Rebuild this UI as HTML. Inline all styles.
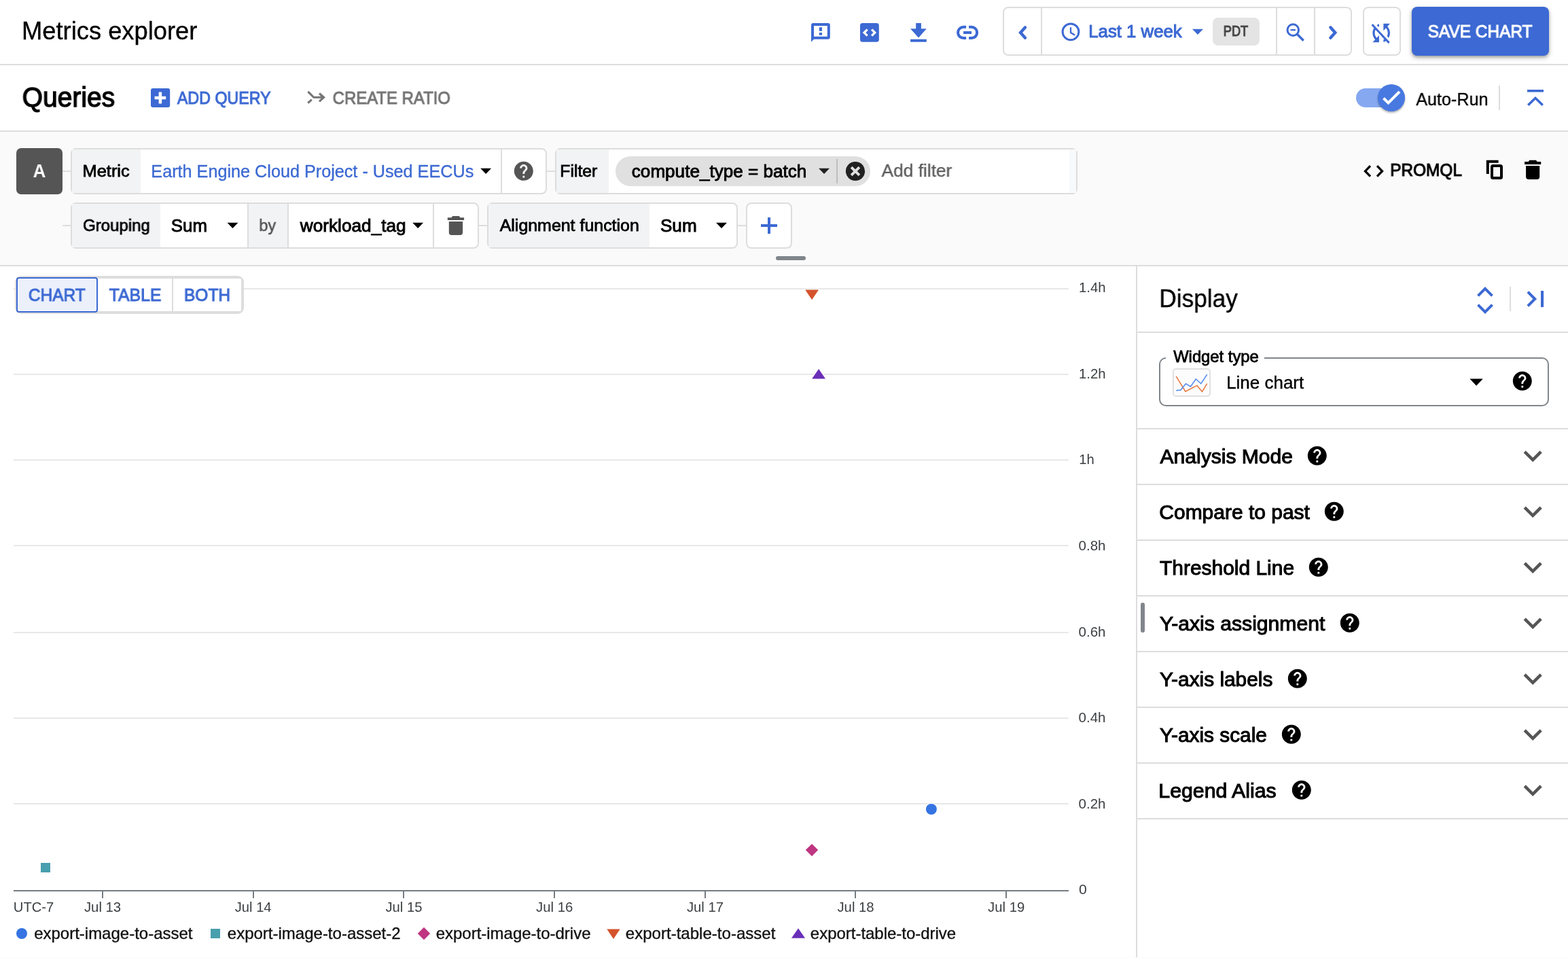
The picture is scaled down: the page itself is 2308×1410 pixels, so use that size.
<!DOCTYPE html>
<html lang="en">
<head>
<meta charset="utf-8">
<meta name="viewport" content="width=2308">
<title>Metrics explorer</title>
<style>
html,body{margin:0;padding:0;background:#fff;}
body{width:2308px;height:1410px;overflow:hidden;font-family:"Liberation Sans",sans-serif;}
#app{position:relative;width:2308px;height:1410px;overflow:hidden;background:#fff;}
#app div,#app svg,#app span{position:absolute;box-sizing:border-box;}
#app svg{display:block;overflow:visible;}
.t{white-space:pre;line-height:1;transform-origin:0 0;will-change:transform;}
.ln{background:#ddd;}
.grp{border:2px solid #ddd;border-radius:8px;background:#fff;overflow:hidden;}
.lab{background:#f1f3f4;}
</style>
</head>
<body>
<div id="app">
<header>
<span class="t" style="left:32px;top:27.52px;font-size:36px;color:#000;-webkit-text-stroke:0.35px #000;transform:translateX(0.03px) scaleX(1.0090);">Metrics explorer</span>
<svg style="left:1190px;top:30px" width="36" height="36" viewBox="1190 30 36 36"><path fill="#3c69d3" fill-rule="evenodd" d="M1197 34h21.8a3 3 0 0 1 3 3v17.7a3 3 0 0 1-3 3H1198l-4 4.1V37a3 3 0 0 1 3-3zM1198 38v15.7h19.8V38zM1205.8 40.2h4.2v5.6h-4.2zM1205.8 48h4.2v3.8h-4.2z"/></svg>
<svg style="left:1262px;top:30px" width="36" height="36" viewBox="1262 30 36 36"><rect x="1266" y="34" width="27.8" height="27.8" rx="3.6" fill="#3c69d3"/><path d="M1276.7 43.3 1272 48l4.7 4.7M1283.1 43.3l4.7 4.7-4.7 4.7" fill="none" stroke="#fff" stroke-width="3.3"/></svg>
<svg style="left:1336px;top:30px" width="32" height="36" viewBox="1336 30 32 36"><path fill="#3c69d3" d="M1348.2 34h7.7v8.2h7.9L1352 55.6 1340.1 42.2h8.1zM1340.1 57.8h23.7v4h-23.7z"/></svg>
<svg style="left:1404px;top:34px" width="40" height="28" viewBox="1404 34 40 28"><path d="M1422.1 39.8H1418.2a8.15 8.15 0 0 0 0 16.3H1422.1M1426.1 39.8H1430a8.15 8.15 0 0 1 0 16.3H1426.1" fill="none" stroke="#3c69d3" stroke-width="4"/><rect x="1418.1" y="46" width="11.9" height="4" fill="#3c69d3"/></svg>
<div style="left:1476px;top:10px;width:514px;height:72px;border:2px solid #ddd;border-radius:8px;background:#fff;"></div>
<div class="ln" style="left:1532px;top:12px;width:2px;height:68px;"></div>
<div class="ln" style="left:1878px;top:12px;width:2px;height:68px;"></div>
<div class="ln" style="left:1934px;top:12px;width:2px;height:68px;"></div>
<svg style="left:1493px;top:31px" width="25" height="34" viewBox="1493 31 25 34"><path d="M1509.01 40.3 L1502.11 48 L1509.01 55.7" fill="none" stroke="#3c69d3" stroke-width="4.4" stroke-linecap="round" stroke-linejoin="miter"/></svg>
<svg style="left:1560px;top:31px" width="32" height="32" viewBox="1560 31 32 32"><circle cx="1576" cy="46.85" r="11.9" fill="none" stroke="#3c69d3" stroke-width="3"/><path d="M1576 40.2v7.8l6.2 3.7" fill="none" stroke="#3c69d3" stroke-width="2.3"/></svg>
<span class="t" style="left:1602px;top:33.56px;font-size:25.2px;color:#3c69d3;-webkit-text-stroke:1.0px #3c69d3;transform:translateX(0.23px) scaleX(1.0231);">Last 1 week</span>
<svg style="left:1753px;top:40px" width="22" height="14" viewBox="1753 40 22 14"><path d="M1755 42.8H1771L1763 50.9z" fill="#3c69d3"/></svg>
<div style="left:1785px;top:26px;width:69px;height:41px;background:#e4e4e4;border-radius:8px;"></div>
<span class="t" style="left:1800px;top:34.71px;font-size:21.6px;color:#444;-webkit-text-stroke:1.1px #444;transform:translateX(0.75px) scaleX(0.8427);">PDT</span>
<svg style="left:1890px;top:31px" width="34" height="34" viewBox="1890 31 34 34"><circle cx="1903.3" cy="44.1" r="8.3" fill="none" stroke="#3c69d3" stroke-width="3"/><path d="M1909.3 50.3 1918.7 59.7" fill="none" stroke="#3c69d3" stroke-width="3.4"/><rect x="1899.5" y="43" width="7.5" height="2.2" fill="#3c69d3"/></svg>
<svg style="left:1949px;top:31px" width="25" height="34" viewBox="1949 31 25 34"><path d="M1958.39 40.3 L1965.29 48 L1958.39 55.7" fill="none" stroke="#3c69d3" stroke-width="4.4" stroke-linecap="round" stroke-linejoin="miter"/></svg>
<div style="left:2006px;top:10px;width:56px;height:72px;border:2px solid #ddd;border-radius:8px;background:#fff;"></div>
<svg style="left:2013.83px;top:27.54px" width="38.36" height="41.17" viewBox="0 0 24 24" preserveAspectRatio="none"><path fill="#3c69d3" d="M10 6.35V4.26c-.8.21-1.55.54-2.23.96l1.46 1.46c.25-.12.5-.24.77-.33zm-7.14-.94l2.36 2.36C4.45 8.99 4 10.44 4 12c0 2.21.91 4.2 2.36 5.64L4 20h6v-6l-2.24 2.24C6.68 15.15 6 13.66 6 12c0-1 .25-1.94.68-2.77l8.08 8.08c-.25.13-.5.25-.77.34v2.09c.8-.21 1.55-.54 2.23-.96l2.36 2.36 1.27-1.27L4.14 4.14 2.86 5.41zM20 4h-6v6l2.24-2.24C17.32 8.85 18 10.34 18 12c0 1-.25 1.94-.68 2.77l1.46 1.46C19.55 15.01 20 13.56 20 12c0-2.21-.91-4.2-2.36-5.64L20 4z"/></svg>
<div style="left:2078px;top:10px;width:202px;height:72px;background:#3c69d3;border-radius:8px;box-shadow:0 2px 4px rgba(0,0,0,.3),0 4px 8px rgba(0,0,0,.15);"></div>
<span class="t" style="left:2101px;top:33.66px;font-size:25.2px;color:#fff;-webkit-text-stroke:1.0px #fff;transform:translateX(0.70px) scaleX(0.9696);">SAVE CHART</span>
<div class="ln" style="left:0px;top:94px;width:2308px;height:2px;"></div>
</header>
<section id="queries-bar">
<span class="t" style="left:32px;top:122.71px;font-size:40.5px;color:#000;-webkit-text-stroke:1.3px #000;transform:translateX(0.62px) scaleX(0.9631);">Queries</span>
<svg style="left:218px;top:126px" width="36" height="36" viewBox="218 126 36 36"><rect x="222" y="130" width="28.2" height="28.1" rx="3" fill="#3c69d3"/><path d="M1 0" fill="none"/><path d="M227.6 144h16.6M235.9 135.6v16.8" stroke="#fff" stroke-width="4.5" fill="none"/></svg>
<span class="t" style="left:260px;top:131.66px;font-size:25.2px;color:#3c69d3;-webkit-text-stroke:1.0px #3c69d3;transform:translateX(0.87px) scaleX(0.9224);">ADD QUERY</span>
<svg style="left:448px;top:130px" width="34" height="28" viewBox="448 130 34 28"><path d="M453.4 134.8 461.8 143.3H476M470 137.5l6.6 5.8-6.6 6M453.2 151.7l5.6-5" fill="none" stroke="#757575" stroke-width="3.1"/></svg>
<span class="t" style="left:489px;top:132.46px;font-size:25.2px;color:#757575;-webkit-text-stroke:1.0px #757575;transform:translateX(0.64px) scaleX(0.9501);">CREATE RATIO</span>
<div style="left:1996px;top:130px;width:72px;height:28px;background:#86a8f0;border-radius:14px;"></div>
<div style="left:2028px;top:124px;width:40px;height:40px;background:#4879e0;border-radius:50%;box-shadow:0 2px 3px rgba(0,0,0,.3);"></div>
<svg style="left:2034px;top:132px;" width="28" height="24" viewBox="0 0 28 24"><path d="M2.5 12.5 9.5 19.5 26 3" fill="none" stroke="#fff" stroke-width="4"/></svg>
<span class="t" style="left:2084px;top:133.86px;font-size:25.2px;color:#000;-webkit-text-stroke:0.35px #000;transform:translateX(0.32px) scaleX(0.9970);">Auto-Run</span>
<div class="ln" style="left:2206px;top:126px;width:2px;height:36px;"></div>
<svg style="left:2248px;top:132px;" width="24" height="24" viewBox="0 0 24 24"><path d="M0 0h24v3.4H0zM12 10 0 21.6l2.5 2.4L12 14.8l9.5 9.2 2.5-2.4z" fill="#3c69d3"/></svg>
<div class="ln" style="left:0px;top:192px;width:2308px;height:2px;"></div>
</section>
<section id="query-a">
<div style="left:0px;top:194px;width:2308px;height:196px;background:#fafafa;"></div>
<div style="left:24px;top:218px;width:68px;height:68px;background:#555;border-radius:7px;"></div>
<span class="t" style="left:48px;top:239.14px;font-size:27px;color:#fff;font-weight:700;transform:translateX(0.54px) scaleX(0.9631);">A</span>
<div class="ln" style="left:92px;top:251px;width:12px;height:2px;"></div>
<div class="grp" style="left:104px;top:218px;width:701px;height:68px;"></div>
<div class="lab" style="left:106px;top:220px;width:101px;height:64px;"></div>
<span class="t" style="left:121px;top:239.81px;font-size:24.2px;color:#000;-webkit-text-stroke:0.8px #000;transform:translateX(0.52px) scaleX(1.0506);">Metric</span>
<span class="t" style="left:222px;top:239.66px;font-size:25.2px;color:#3c69d3;-webkit-text-stroke:0.35px #3c69d3;transform:translateX(0.37px) scaleX(1.0006);">Earth Engine Cloud Project - Used EECUs</span>
<svg style="left:705px;top:245px" width="21" height="14" viewBox="705 245 21 14"><path d="M707.2 247.8H723.1L715.15 256z" fill="#000"/></svg>
<div class="ln" style="left:737px;top:220px;width:2px;height:64px;"></div>
<svg style="left:754.2px;top:235.2px" width="33.6" height="33.6" viewBox="0 0 24 24"><path fill="#555" d="M12 2C6.48 2 2 6.48 2 12s4.48 10 10 10 10-4.48 10-10S17.52 2 12 2zm1 17h-2v-2h2v2zm2.07-7.75l-.9.92C13.45 12.9 13 13.5 13 15h-2v-.5c0-1.1.45-2.1 1.17-2.83l1.24-1.26c.37-.36.59-.86.59-1.41 0-1.1-.9-2-2-2s-2 .9-2 2H8c0-2.21 1.79-4 4-4s4 1.79 4 4c0 .88-.36 1.68-.93 2.25z"/></svg>
<div class="ln" style="left:805px;top:251px;width:12px;height:2px;"></div>
<div class="grp" style="left:817px;top:218px;width:769px;height:68px;"></div>
<div class="lab" style="left:819px;top:220px;width:77px;height:64px;"></div>
<div style="left:1574px;top:220px;width:10px;height:64px;background:#f8f9fa;"></div>
<span class="t" style="left:824px;top:239.51px;font-size:24.2px;color:#000;-webkit-text-stroke:0.8px #000;transform:translateX(0.33px) scaleX(1.0217);">Filter</span>
<div style="left:906px;top:230px;width:375px;height:44px;background:#e0e0e0;border-radius:22px;"></div>
<span class="t" style="left:929px;top:239.66px;font-size:25.2px;color:#000;-webkit-text-stroke:0.85px #000;transform:translateX(0.82px) scaleX(1.0359);">compute_type = batch</span>
<svg style="left:1203px;top:245px" width="21" height="14" viewBox="1203 245 21 14"><path d="M1205.1 247.8H1221L1213.05 256z" fill="#212121"/></svg>
<div style="left:1231px;top:234px;width:2px;height:36px;background:#bdbdbd;"></div>
<svg style="left:1242px;top:235px" width="34" height="34" viewBox="1242 235 34 34"><circle cx="1259" cy="252" r="14.1" fill="#212121"/><path d="M1253.1 246.1 1264.9 257.9M1264.9 246.1 1253.1 257.9" stroke="#e0e0e0" stroke-width="3.9" fill="none"/></svg>
<span class="t" style="left:1297px;top:238.38px;font-size:26.6px;color:#5c5c5c;-webkit-text-stroke:0.35px #5c5c5c;transform:translateX(0.56px) scaleX(0.9883);">Add filter</span>
<svg style="left:2003px;top:238px" width="38" height="28" viewBox="2003 238 38 28"><path d="M2017 244.2 2009.5 251.9 2017 259.6M2027 244.2 2034.5 251.9 2027 259.6" fill="none" stroke="#000" stroke-width="3.3"/></svg>
<span class="t" style="left:2046px;top:237.56px;font-size:25.2px;color:#000;-webkit-text-stroke:1.0px #000;transform:translateX(0.22px) scaleX(0.9680);">PROMQL</span>
<svg style="left:2184px;top:232px" width="32" height="36" viewBox="2184 232 32 36"><path d="M2205.6 237.8H2189.8V256" fill="none" stroke="#000" stroke-width="4"/><rect x="2196" y="244" width="14" height="18.1" rx="1.5" fill="none" stroke="#000" stroke-width="4"/></svg>
<svg style="left:2242px;top:233px" width="30" height="34" viewBox="2242 233 30 34"><path d="M2251.33 235.8H2260.97L2262.57 238.1H2268.2V242H2244.1V238.1H2249.73zM2246.1 243.9H2266.2V260.1a4 4 0 0 1 -4 4H2250.1a4 4 0 0 1 -4 -4z" fill="#000"/></svg>
<div class="ln" style="left:92px;top:331px;width:12px;height:2px;"></div>
<div class="grp" style="left:104px;top:298px;width:601px;height:68px;"></div>
<div class="lab" style="left:106px;top:300px;width:130px;height:64px;"></div>
<span class="t" style="left:122px;top:319.51px;font-size:24.2px;color:#000;-webkit-text-stroke:0.8px #000;transform:translateX(0.06px) scaleX(0.9927);">Grouping</span>
<span class="t" style="left:251px;top:319.66px;font-size:25.2px;color:#000;-webkit-text-stroke:0.9px #000;transform:translateX(0.82px) scaleX(1.0253);">Sum</span>
<svg style="left:332px;top:325px" width="21" height="14" viewBox="332 325 21 14"><path d="M334.5 327.8H350.4L342.45 336z" fill="#000"/></svg>
<div class="ln" style="left:364px;top:300px;width:2px;height:64px;"></div>
<div class="lab" style="left:366px;top:300px;width:57px;height:64px;"></div>
<span class="t" style="left:381px;top:319.51px;font-size:24.2px;color:#555;-webkit-text-stroke:0.6px #555;transform:translateX(0.40px) scaleX(0.9632);">by</span>
<div class="ln" style="left:423px;top:300px;width:2px;height:64px;"></div>
<span class="t" style="left:441px;top:319.66px;font-size:25.2px;color:#000;-webkit-text-stroke:0.9px #000;transform:translateX(0.78px) scaleX(1.0406);">workload_tag</span>
<svg style="left:605px;top:325px" width="21" height="14" viewBox="605 325 21 14"><path d="M607.2 327.8H623.1L615.15 336z" fill="#000"/></svg>
<div class="ln" style="left:637px;top:300px;width:2px;height:64px;"></div>
<svg style="left:656px;top:315px" width="30" height="34" viewBox="656 315 30 34"><path d="M666.09 317.9H675.81L677.4 320.18H683.1V324.06H658.8V320.18H664.5zM660.79 325.94H681.11V342.03a3.97 3.97 0 0 1 -3.97 3.97H664.76a3.97 3.97 0 0 1 -3.97 -3.97z" fill="#555"/></svg>
<div class="ln" style="left:705px;top:331px;width:12px;height:2px;"></div>
<div class="grp" style="left:717px;top:298px;width:369px;height:68px;"></div>
<div class="lab" style="left:719px;top:300px;width:237px;height:64px;"></div>
<span class="t" style="left:735px;top:319.51px;font-size:24.2px;color:#000;-webkit-text-stroke:0.8px #000;transform:translateX(0.67px) scaleX(1.0309);">Alignment function</span>
<span class="t" style="left:971px;top:319.66px;font-size:25.2px;color:#000;-webkit-text-stroke:0.9px #000;transform:translateX(0.95px) scaleX(1.0371);">Sum</span>
<svg style="left:1052px;top:325px" width="22" height="14" viewBox="1052 325 22 14"><path d="M1054 327.8H1070L1062 336z" fill="#000"/></svg>
<div class="ln" style="left:1086px;top:331px;width:12px;height:2px;"></div>
<div class="grp" style="left:1098px;top:298px;width:68px;height:68px;"></div>
<svg style="left:1116px;top:316px" width="32" height="32" viewBox="1116 316 32 32"><path d="M1120 332h24M1132 320v24" stroke="#3c69d3" stroke-width="4" fill="none"/></svg>
<div style="left:1142px;top:377px;width:44px;height:6px;background:#80868b;border-radius:3px;"></div>
<div class="ln" style="left:0px;top:390px;width:2308px;height:2px;"></div>
</section>
<main id="chart">
<div style="left:20px;top:424px;width:1553px;height:2px;background:#e8e8e8;"></div>
<div style="left:20px;top:550px;width:1553px;height:2px;background:#e8e8e8;"></div>
<div style="left:20px;top:676px;width:1553px;height:2px;background:#e8e8e8;"></div>
<div style="left:20px;top:802px;width:1553px;height:2px;background:#e8e8e8;"></div>
<div style="left:20px;top:930px;width:1553px;height:2px;background:#e8e8e8;"></div>
<div style="left:20px;top:1056px;width:1553px;height:2px;background:#e8e8e8;"></div>
<div style="left:20px;top:1182px;width:1553px;height:2px;background:#e8e8e8;"></div>
<div style="left:20px;top:1310px;width:1553px;height:2px;background:#757c82;"></div>
<div style="left:150px;top:1312px;width:2px;height:10px;background:#757c82;"></div>
<div style="left:372px;top:1312px;width:2px;height:10px;background:#757c82;"></div>
<div style="left:593px;top:1312px;width:2px;height:10px;background:#757c82;"></div>
<div style="left:815px;top:1312px;width:2px;height:10px;background:#757c82;"></div>
<div style="left:1037px;top:1312px;width:2px;height:10px;background:#757c82;"></div>
<div style="left:1258px;top:1312px;width:2px;height:10px;background:#757c82;"></div>
<div style="left:1480px;top:1312px;width:2px;height:10px;background:#757c82;"></div>
<span class="t" style="left:1587px;top:414.24px;font-size:19.8px;color:#3c4043;transform:translateX(0.96px) scaleX(1.0295);">1.4h</span>
<span class="t" style="left:1587px;top:541.24px;font-size:19.8px;color:#3c4043;transform:translateX(0.96px) scaleX(1.0295);">1.2h</span>
<span class="t" style="left:1588px;top:667.24px;font-size:19.8px;color:#3c4043;transform:translateX(0.22px) scaleX(1.0222);">1h</span>
<span class="t" style="left:1587px;top:794.24px;font-size:19.8px;color:#3c4043;transform:translateX(0.59px) scaleX(1.0364);">0.8h</span>
<span class="t" style="left:1587px;top:921.24px;font-size:19.8px;color:#3c4043;transform:translateX(0.59px) scaleX(1.0364);">0.6h</span>
<span class="t" style="left:1587px;top:1047.24px;font-size:19.8px;color:#3c4043;transform:translateX(0.59px) scaleX(1.0364);">0.4h</span>
<span class="t" style="left:1587px;top:1174.24px;font-size:19.8px;color:#3c4043;transform:translateX(0.59px) scaleX(1.0364);">0.2h</span>
<span class="t" style="left:1587px;top:1300.24px;font-size:19.8px;color:#3c4043;transform:translateX(0.90px) scaleX(1.0676);">0</span>
<span class="t" style="left:19px;top:1326.24px;font-size:19.8px;color:#3c4043;transform:translateX(0.85px) scaleX(1.0202);">UTC-7</span>
<span class="t" style="left:123px;top:1326.24px;font-size:19.8px;color:#3c4043;transform:translateX(0.93px) scaleX(1.0274);">Jul 13</span>
<span class="t" style="left:345px;top:1326.24px;font-size:19.8px;color:#3c4043;transform:translateX(0.73px) scaleX(1.0200);">Jul 14</span>
<span class="t" style="left:567px;top:1326.24px;font-size:19.8px;color:#3c4043;transform:translateX(0.43px) scaleX(1.0237);">Jul 15</span>
<span class="t" style="left:789px;top:1326.24px;font-size:19.8px;color:#3c4043;transform:translateX(0.10px) scaleX(1.0287);">Jul 16</span>
<span class="t" style="left:1010px;top:1326.24px;font-size:19.8px;color:#3c4043;transform:translateX(0.94px) scaleX(1.0231);">Jul 17</span>
<span class="t" style="left:1232px;top:1326.24px;font-size:19.8px;color:#3c4043;transform:translateX(0.46px) scaleX(1.0256);">Jul 18</span>
<span class="t" style="left:1454px;top:1326.24px;font-size:19.8px;color:#3c4043;transform:translateX(0.12px) scaleX(1.0245);">Jul 19</span>
<svg style="left:0px;top:392px;" width="1672" height="940" viewBox="0 392 1672 940"><rect x="60" y="1270" width="14" height="14" fill="#489fae" stroke="#fff" stroke-width="2" paint-order="stroke"/><path d="M1185.2 426.5h19.8L1195.1 441.2z" fill="#d4532c" stroke="#fff" stroke-width="2" paint-order="stroke"/><path d="M1205.1 543l9.9 14.6h-19.8z" fill="#6a2fb8" stroke="#fff" stroke-width="2" paint-order="stroke"/><path d="M1195 1241.9l9.2 9.2-9.2 9.2-9.2-9.2z" fill="#bf3682" stroke="#fff" stroke-width="2" paint-order="stroke"/><circle cx="1370.9" cy="1191" r="8" fill="#3574e2" stroke="#fff" stroke-width="2" paint-order="stroke"/></svg>
<div style="left:22px;top:406px;width:337px;height:56px;background:#ddd;border-radius:9px;"></div>
<div style="left:26px;top:410px;width:329px;height:48px;background:#fff;border-radius:2px;"></div>
<div class="ln" style="left:253px;top:410px;width:2px;height:48px;"></div>
<div style="left:24px;top:408px;width:120px;height:52px;border:2px solid #3c69d3;border-radius:4px;background:#ebf0fb;"></div>
<span class="t" style="left:41px;top:421.56px;font-size:25.2px;color:#3c69d3;-webkit-text-stroke:1.0px #3c69d3;transform:translateX(0.83px) scaleX(0.9709);">CHART</span>
<span class="t" style="left:160px;top:421.56px;font-size:25.2px;color:#3c69d3;-webkit-text-stroke:1.0px #3c69d3;transform:translateX(0.63px) scaleX(0.9873);">TABLE</span>
<span class="t" style="left:270px;top:421.56px;font-size:25.2px;color:#3c69d3;-webkit-text-stroke:1.0px #3c69d3;transform:translateX(0.81px) scaleX(0.9769);">BOTH</span>
<svg style="left:0px;top:1360px;" width="1672" height="30" viewBox="0 1360 1672 30"><circle cx="32" cy="1374" r="8" fill="#3574e2"/><rect x="310" y="1367" width="14" height="14" fill="#489fae"/><path d="M624 1364.8l9.2 9.2-9.2 9.2-9.2-9.2z" fill="#bf3682"/><path d="M893.3 1367.5h19.4L903 1382z" fill="#d4532c"/><path d="M1175 1366.3l10 14.4h-20z" fill="#6a2fb8"/></svg>
<span class="t" style="left:50px;top:1363.19px;font-size:23.4px;color:#111;-webkit-text-stroke:0.35px #111;transform:translateX(0.14px) scaleX(1.0256);">export-image-to-asset</span>
<span class="t" style="left:334px;top:1363.19px;font-size:23.4px;color:#111;-webkit-text-stroke:0.35px #111;transform:translateX(0.78px) scaleX(1.0263);">export-image-to-asset-2</span>
<span class="t" style="left:641px;top:1363.19px;font-size:23.4px;color:#111;-webkit-text-stroke:0.35px #111;transform:translateX(0.70px) scaleX(1.0247);">export-image-to-drive</span>
<span class="t" style="left:920px;top:1363.19px;font-size:23.4px;color:#111;-webkit-text-stroke:0.35px #111;transform:translateX(0.79px) scaleX(1.0285);">export-table-to-asset</span>
<span class="t" style="left:1192px;top:1363.19px;font-size:23.4px;color:#111;-webkit-text-stroke:0.35px #111;transform:translateX(0.83px) scaleX(1.0240);">export-table-to-drive</span>
</main>
<aside id="display-panel">
<div class="ln" style="left:1672px;top:392px;width:2px;height:1018px;"></div>
<span class="t" style="left:1706px;top:421.52px;font-size:36px;color:#000;-webkit-text-stroke:0.35px #000;transform:translateX(0.28px) scaleX(0.9791);">Display</span>
<svg style="left:2168px;top:416px" width="36" height="52" viewBox="2168 416 36 52"><path d="M2175.5 435.33 L2186 424.83 L2196.5 435.33M2175.5 448.67 L2186 459.17 L2196.5 448.67" fill="none" stroke="#3c69d3" stroke-width="4"/></svg>
<div class="ln" style="left:2222px;top:422px;width:2px;height:36px;"></div>
<svg style="left:2242px;top:422px" width="36" height="36" viewBox="2242 422 36 36"><path d="M2248.87 429.6 L2259.27 440 L2248.87 450.4" fill="none" stroke="#3c69d3" stroke-width="4"/><rect x="2268" y="428" width="4.1" height="24" fill="#3c69d3"/></svg>
<div class="ln" style="left:1674px;top:488px;width:634px;height:2px;"></div>
<div style="left:1706px;top:526px;width:574px;height:72px;border:2px solid #80868b;border-radius:10px;"></div>
<div style="left:1716px;top:524px;width:145px;height:6px;background:#fff;"></div>
<span class="t" style="left:1727px;top:514.29px;font-size:23.4px;color:#000;-webkit-text-stroke:0.8px #000;transform:translateX(0.14px) scaleX(1.0170);">Widget type</span>
<div style="left:1726px;top:542px;width:56px;height:42px;border:2px solid #e0e0e0;border-radius:5px;background:#fcfcfc;"></div>
<svg style="left:1726px;top:542px" width="56" height="42" viewBox="1726 542 56 42"><path d="M1731.2 553.9 1744.9 576.2 1761.9 567.4 1769.5 576.4 1776.7 564.7" fill="none" stroke="#e8743b" stroke-width="1.5"/><path d="M1731.2 574.7 1738 574 1745.4 564.7 1752.5 568.9 1760.3 557.8 1767.8 564.7 1776.7 551.2" fill="none" stroke="#4d86f0" stroke-width="1.5"/></svg>
<span class="t" style="left:1805px;top:551.36px;font-size:25.2px;color:#000;-webkit-text-stroke:0.35px #000;transform:translateX(0.14px) scaleX(1.0314);">Line chart</span>
<svg style="left:2161px;top:555px" width="25" height="16" viewBox="2161 555 25 16"><path d="M2163.4 557.6H2182.8L2173.1 567.7z" fill="#000"/></svg>
<svg style="left:2224.2px;top:544.2px" width="33.6" height="33.6" viewBox="0 0 24 24"><path fill="#000" d="M12 2C6.48 2 2 6.48 2 12s4.48 10 10 10 10-4.48 10-10S17.52 2 12 2zm1 17h-2v-2h2v2zm2.07-7.75l-.9.92C13.45 12.9 13 13.5 13 15h-2v-.5c0-1.1.45-2.1 1.17-2.83l1.24-1.26c.37-.36.59-.86.59-1.41 0-1.1-.9-2-2-2s-2 .9-2 2H8c0-2.21 1.79-4 4-4s4 1.79 4 4c0 .88-.36 1.68-.93 2.25z"/></svg>
<div class="ln" style="left:1674px;top:630px;width:634px;height:2px;"></div>
<span class="t" style="left:1707px;top:657.62px;font-size:28.8px;color:#000;-webkit-text-stroke:1.0px #000;transform:translateX(0.49px) scaleX(1.0437);">Analysis Mode</span>
<svg style="left:1922.2px;top:654.2px" width="33.6" height="33.6" viewBox="0 0 24 24"><path fill="#000" d="M12 2C6.48 2 2 6.48 2 12s4.48 10 10 10 10-4.48 10-10S17.52 2 12 2zm1 17h-2v-2h2v2zm2.07-7.75l-.9.92C13.45 12.9 13 13.5 13 15h-2v-.5c0-1.1.45-2.1 1.17-2.83l1.24-1.26c.37-.36.59-.86.59-1.41 0-1.1-.9-2-2-2s-2 .9-2 2H8c0-2.21 1.79-4 4-4s4 1.79 4 4c0 .88-.36 1.68-.93 2.25z"/></svg>
<svg style="left:2235px;top:656px" width="42" height="30" viewBox="2235 656 42 30"><path d="M2244.2 664.82 L2256.2 676.82 L2268.2 664.82" fill="none" stroke="#555" stroke-width="4.5" stroke-linecap="butt" stroke-linejoin="miter"/></svg>
<div class="ln" style="left:1674px;top:712px;width:634px;height:2px;"></div>
<span class="t" style="left:1706px;top:739.62px;font-size:28.8px;color:#000;-webkit-text-stroke:1.0px #000;transform:translateX(0.32px) scaleX(1.0408);">Compare to past</span>
<svg style="left:1946.9px;top:736.2px" width="33.6" height="33.6" viewBox="0 0 24 24"><path fill="#000" d="M12 2C6.48 2 2 6.48 2 12s4.48 10 10 10 10-4.48 10-10S17.52 2 12 2zm1 17h-2v-2h2v2zm2.07-7.75l-.9.92C13.45 12.9 13 13.5 13 15h-2v-.5c0-1.1.45-2.1 1.17-2.83l1.24-1.26c.37-.36.59-.86.59-1.41 0-1.1-.9-2-2-2s-2 .9-2 2H8c0-2.21 1.79-4 4-4s4 1.79 4 4c0 .88-.36 1.68-.93 2.25z"/></svg>
<svg style="left:2235px;top:738px" width="42" height="30" viewBox="2235 738 42 30"><path d="M2244.2 746.82 L2256.2 758.82 L2268.2 746.82" fill="none" stroke="#555" stroke-width="4.5" stroke-linecap="butt" stroke-linejoin="miter"/></svg>
<div class="ln" style="left:1674px;top:794px;width:634px;height:2px;"></div>
<span class="t" style="left:1707px;top:821.62px;font-size:28.8px;color:#000;-webkit-text-stroke:1.0px #000;transform:translateX(0.03px) scaleX(1.0395);">Threshold Line</span>
<svg style="left:1924.2px;top:818.2px" width="33.6" height="33.6" viewBox="0 0 24 24"><path fill="#000" d="M12 2C6.48 2 2 6.48 2 12s4.48 10 10 10 10-4.48 10-10S17.52 2 12 2zm1 17h-2v-2h2v2zm2.07-7.75l-.9.92C13.45 12.9 13 13.5 13 15h-2v-.5c0-1.1.45-2.1 1.17-2.83l1.24-1.26c.37-.36.59-.86.59-1.41 0-1.1-.9-2-2-2s-2 .9-2 2H8c0-2.21 1.79-4 4-4s4 1.79 4 4c0 .88-.36 1.68-.93 2.25z"/></svg>
<svg style="left:2235px;top:820px" width="42" height="30" viewBox="2235 820 42 30"><path d="M2244.2 828.82 L2256.2 840.82 L2268.2 828.82" fill="none" stroke="#555" stroke-width="4.5" stroke-linecap="butt" stroke-linejoin="miter"/></svg>
<div class="ln" style="left:1674px;top:876px;width:634px;height:2px;"></div>
<span class="t" style="left:1706px;top:903.62px;font-size:28.8px;color:#000;-webkit-text-stroke:1.0px #000;transform:translateX(0.93px) scaleX(1.0464);">Y-axis assignment</span>
<svg style="left:1969.9px;top:900.2px" width="33.6" height="33.6" viewBox="0 0 24 24"><path fill="#000" d="M12 2C6.48 2 2 6.48 2 12s4.48 10 10 10 10-4.48 10-10S17.52 2 12 2zm1 17h-2v-2h2v2zm2.07-7.75l-.9.92C13.45 12.9 13 13.5 13 15h-2v-.5c0-1.1.45-2.1 1.17-2.83l1.24-1.26c.37-.36.59-.86.59-1.41 0-1.1-.9-2-2-2s-2 .9-2 2H8c0-2.21 1.79-4 4-4s4 1.79 4 4c0 .88-.36 1.68-.93 2.25z"/></svg>
<svg style="left:2235px;top:902px" width="42" height="30" viewBox="2235 902 42 30"><path d="M2244.2 910.82 L2256.2 922.82 L2268.2 910.82" fill="none" stroke="#555" stroke-width="4.5" stroke-linecap="butt" stroke-linejoin="miter"/></svg>
<div class="ln" style="left:1674px;top:958px;width:634px;height:2px;"></div>
<span class="t" style="left:1706px;top:985.62px;font-size:28.8px;color:#000;-webkit-text-stroke:1.0px #000;transform:translateX(0.95px) scaleX(1.0360);">Y-axis labels</span>
<svg style="left:1893.3px;top:982.2px" width="33.6" height="33.6" viewBox="0 0 24 24"><path fill="#000" d="M12 2C6.48 2 2 6.48 2 12s4.48 10 10 10 10-4.48 10-10S17.52 2 12 2zm1 17h-2v-2h2v2zm2.07-7.75l-.9.92C13.45 12.9 13 13.5 13 15h-2v-.5c0-1.1.45-2.1 1.17-2.83l1.24-1.26c.37-.36.59-.86.59-1.41 0-1.1-.9-2-2-2s-2 .9-2 2H8c0-2.21 1.79-4 4-4s4 1.79 4 4c0 .88-.36 1.68-.93 2.25z"/></svg>
<svg style="left:2235px;top:984px" width="42" height="30" viewBox="2235 984 42 30"><path d="M2244.2 992.82 L2256.2 1004.82 L2268.2 992.82" fill="none" stroke="#555" stroke-width="4.5" stroke-linecap="butt" stroke-linejoin="miter"/></svg>
<div class="ln" style="left:1674px;top:1040px;width:634px;height:2px;"></div>
<span class="t" style="left:1706px;top:1067.62px;font-size:28.8px;color:#000;-webkit-text-stroke:1.0px #000;transform:translateX(0.94px) scaleX(1.0350);">Y-axis scale</span>
<svg style="left:1884.3px;top:1064.2px" width="33.6" height="33.6" viewBox="0 0 24 24"><path fill="#000" d="M12 2C6.48 2 2 6.48 2 12s4.48 10 10 10 10-4.48 10-10S17.52 2 12 2zm1 17h-2v-2h2v2zm2.07-7.75l-.9.92C13.45 12.9 13 13.5 13 15h-2v-.5c0-1.1.45-2.1 1.17-2.83l1.24-1.26c.37-.36.59-.86.59-1.41 0-1.1-.9-2-2-2s-2 .9-2 2H8c0-2.21 1.79-4 4-4s4 1.79 4 4c0 .88-.36 1.68-.93 2.25z"/></svg>
<svg style="left:2235px;top:1066px" width="42" height="30" viewBox="2235 1066 42 30"><path d="M2244.2 1074.82 L2256.2 1086.82 L2268.2 1074.82" fill="none" stroke="#555" stroke-width="4.5" stroke-linecap="butt" stroke-linejoin="miter"/></svg>
<div class="ln" style="left:1674px;top:1122px;width:634px;height:2px;"></div>
<span class="t" style="left:1705px;top:1149.62px;font-size:28.8px;color:#000;-webkit-text-stroke:1.0px #000;transform:translateX(0.30px) scaleX(1.0515);">Legend Alias</span>
<svg style="left:1898.9px;top:1146.2px" width="33.6" height="33.6" viewBox="0 0 24 24"><path fill="#000" d="M12 2C6.48 2 2 6.48 2 12s4.48 10 10 10 10-4.48 10-10S17.52 2 12 2zm1 17h-2v-2h2v2zm2.07-7.75l-.9.92C13.45 12.9 13 13.5 13 15h-2v-.5c0-1.1.45-2.1 1.17-2.83l1.24-1.26c.37-.36.59-.86.59-1.41 0-1.1-.9-2-2-2s-2 .9-2 2H8c0-2.21 1.79-4 4-4s4 1.79 4 4c0 .88-.36 1.68-.93 2.25z"/></svg>
<svg style="left:2235px;top:1148px" width="42" height="30" viewBox="2235 1148 42 30"><path d="M2244.2 1156.82 L2256.2 1168.82 L2268.2 1156.82" fill="none" stroke="#555" stroke-width="4.5" stroke-linecap="butt" stroke-linejoin="miter"/></svg>
<div class="ln" style="left:1674px;top:1204px;width:634px;height:2px;"></div>
<div style="left:1679px;top:887px;width:6px;height:44px;background:#80868b;border-radius:3px;"></div>
</aside>
<div style="left:0px;top:1409px;width:2308px;height:1px;background:#fbfbfb;"></div>
</div>
</body>
</html>
